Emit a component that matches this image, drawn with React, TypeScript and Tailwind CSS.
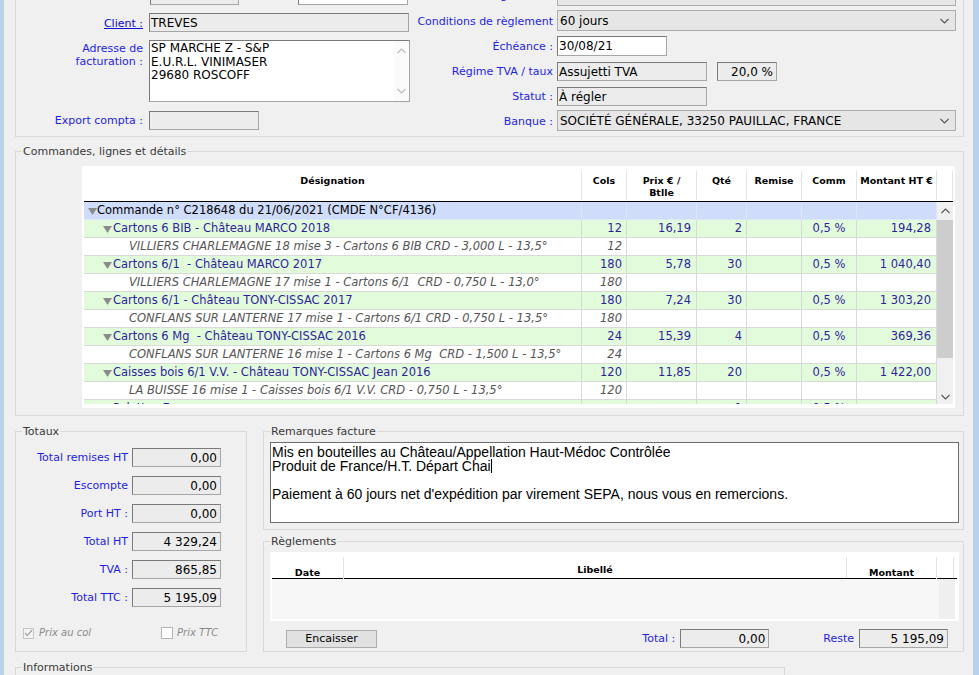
import type { ReactNode } from "react";

/* ---------- petits composants ---------- */

const LBL = "text-[11px] leading-[13px] text-[#1e1ee6] whitespace-nowrap";

const Chevron = ({ up = false }: { up?: boolean }) => (
  <svg width="9" height="6" viewBox="0 0 9 6" className="shrink-0">
    <polyline
      points={up ? "0.5,5 4.5,1 8.5,5" : "0.5,1 4.5,5 8.5,1"}
      fill="none"
      stroke="#5a5a5a"
      strokeWidth="1.2"
    />
  </svg>
);

const Tri = ({ className = "" }: { className?: string }) => (
  <svg width="9" height="8" viewBox="0 0 9 8" className={`shrink-0 ${className}`}>
    <polygon points="0,1 9,1 4.5,8" fill="#8c8c8c" />
  </svg>
);

const Box = ({
  className = "",
  white = false,
  right = false,
  children,
}: {
  className?: string;
  white?: boolean;
  right?: boolean;
  children?: ReactNode;
}) => (
  <div
    className={`flex shrink-0 items-center overflow-hidden whitespace-nowrap border border-[#a6a6a6] border-l-[#7a7a7a] border-t-[#7a7a7a] text-[12px] leading-[14px] text-black ${
      white ? "bg-white" : "bg-[#ececec]"
    } ${right ? "justify-end pr-[3px]" : "pl-[1px]"} ${className}`}
  >
    {children}
  </div>
);

const Combo = ({ children }: { children?: ReactNode }) => (
  <div className="flex h-[21px] w-[399px] shrink-0 items-center justify-between border border-[#adadad] bg-[#e6e6e6] pl-[2px] pr-[6px] text-[12px] leading-[14px]">
    <span>{children}</span>
    <Chevron />
  </div>
);

const Group = ({
  title,
  className = "",
  children,
}: {
  title: string;
  className?: string;
  children?: ReactNode;
}) => (
  <fieldset className={`min-w-0 border border-[#d9d9d9] ${className}`}>
    <legend className="ml-[6px] px-[1px] text-[11px] leading-[13px] text-[#3a3a3a]">{title}</legend>
    {children}
  </fieldset>
);

/* ---------- données ---------- */

type Ligne = {
  k: "cmd" | "prod" | "det";
  d: string;
  cols?: string;
  prix?: string;
  qte?: string;
  comm?: string;
  mt?: string;
};

const LIGNES: Ligne[] = [
  { k: "cmd", d: "Commande n° C218648 du 21/06/2021 (CMDE N°CF/4136)" },
  { k: "prod", d: "Cartons 6 BIB - Château MARCO 2018", cols: "12", prix: "16,19", qte: "2", comm: "0,5 %", mt: "194,28" },
  { k: "det", d: "VILLIERS CHARLEMAGNE 18 mise 3 - Cartons 6 BIB CRD - 3,000 L - 13,5°", cols: "12" },
  { k: "prod", d: "Cartons 6/1  - Château MARCO 2017", cols: "180", prix: "5,78", qte: "30", comm: "0,5 %", mt: "1 040,40" },
  { k: "det", d: "VILLIERS CHARLEMAGNE 17 mise 1 - Cartons 6/1  CRD - 0,750 L - 13,0°", cols: "180" },
  { k: "prod", d: "Cartons 6/1 - Château TONY-CISSAC 2017", cols: "180", prix: "7,24", qte: "30", comm: "0,5 %", mt: "1 303,20" },
  { k: "det", d: "CONFLANS SUR LANTERNE 17 mise 1 - Cartons 6/1 CRD - 0,750 L - 13,5°", cols: "180" },
  { k: "prod", d: "Cartons 6 Mg  - Château TONY-CISSAC 2016", cols: "24", prix: "15,39", qte: "4", comm: "0,5 %", mt: "369,36" },
  { k: "det", d: "CONFLANS SUR LANTERNE 16 mise 1 - Cartons 6 Mg  CRD - 1,500 L - 13,5°", cols: "24" },
  { k: "prod", d: "Caisses bois 6/1 V.V. - Château TONY-CISSAC Jean 2016", cols: "120", prix: "11,85", qte: "20", comm: "0,5 %", mt: "1 422,00" },
  { k: "det", d: "LA BUISSE 16 mise 1 - Caisses bois 6/1 V.V. CRD - 0,750 L - 13,5°", cols: "120" },
  { k: "prod", d: "Palettes Euro", qte: "1", comm: "0,5 %" },
];

const TOTAUX = [
  ["Total remises HT", "0,00"],
  ["Escompte", "0,00"],
  ["Port HT :", "0,00"],
  ["Total HT", "4 329,24"],
  ["TVA :", "865,85"],
  ["Total TTC :", "5 195,09"],
];

/* ---------- tableau des lignes ---------- */

const HeadCell = ({ className, children }: { className: string; children?: ReactNode }) => (
  <div className={`flex shrink-0 flex-col pt-[5px] pb-[1px] ${className}`}>
    <div className="flex-1 border-r border-[#e3e3e3] pt-[4px] text-center text-[9.5px] font-bold leading-[12px]">
      {children}
    </div>
  </div>
);

const LigneRow = ({ l }: { l: Ligne }) => {
  const bg = l.k === "cmd" ? "bg-[#cfdcfa]" : l.k === "prod" ? "bg-[#e2fbdb]" : "bg-white";
  const sep = l.k === "cmd" ? "border-[#dfe6fb]" : "border-[#d9d9d9]";
  const txt = l.k === "cmd" ? "text-black" : l.k === "prod" ? "text-[#2e1f9e]" : "italic text-[#555555]";
  const num = `flex shrink-0 items-center justify-end border-r ${sep}`;
  return (
    <div className={`flex h-[18px] shrink-0 border-b ${sep} ${bg} ${txt} text-[11.5px] leading-[17px]`}>
      <div className={`flex w-[498px] shrink-0 items-center overflow-hidden whitespace-pre border-r ${sep}`}>
        {l.k === "cmd" && <Tri className="ml-[4px]" />}
        {l.k === "prod" && <Tri className="ml-[19px] mr-[1px]" />}
        <span className={l.k === "det" ? "ml-[45px]" : ""}>{l.d}</span>
      </div>
      <div className={`${num} w-[45px] pr-[4px]`}>{l.cols}</div>
      <div className={`${num} w-[70px] pr-[5px]`}>{l.prix}</div>
      <div className={`${num} w-[50px] pr-[4px]`}>{l.qte}</div>
      <div className={`${num} w-[55px] pr-[4px]`}></div>
      <div className={`flex w-[55px] shrink-0 items-center justify-center border-r ${sep}`}>{l.comm}</div>
      <div className={`${num} w-[80px] pr-[5px]`}>{l.mt}</div>
    </div>
  );
};

const TableLignes = () => (
  <div className="flex h-[242px] w-[873px] flex-col bg-white px-[2px]">
    <div className="flex h-[36px] shrink-0 border-b border-black">
      <HeadCell className="w-[498px]">Désignation</HeadCell>
      <HeadCell className="w-[45px]">Cols</HeadCell>
      <HeadCell className="w-[70px]">
        Prix € /<br />Btlle
      </HeadCell>
      <HeadCell className="w-[50px]">Qté</HeadCell>
      <HeadCell className="w-[55px]">Remise</HeadCell>
      <HeadCell className="w-[55px]">Comm</HeadCell>
      <HeadCell className="w-[80px]">Montant HT €</HeadCell>
      <HeadCell className="w-[16px]" />
    </div>
    <div className="flex h-[202px] shrink-0 overflow-hidden">
      <div className="flex w-[853px] shrink-0 flex-col">
        {LIGNES.map((l, i) => (
          <LigneRow key={i} l={l} />
        ))}
      </div>
      <div className="flex w-[16px] shrink-0 flex-col bg-[#f0f0f0]">
        <div className="flex h-[18px] shrink-0 items-center justify-center">
          <Chevron up />
        </div>
        <div className="h-[138px] shrink-0 bg-[#cdcdcd]" />
        <div className="flex-1" />
        <div className="flex h-[14px] shrink-0 items-center justify-center">
          <Chevron />
        </div>
      </div>
    </div>
  </div>
);

/* ---------- page ---------- */

export default function App() {
  return (
    <div className="flex h-[675px] w-[979px] overflow-hidden bg-[#f0f0f0] font-['DejaVu_Sans',sans-serif] text-black">
      <div className="w-[4px] shrink-0 bg-[#b9d1ea]" />

      <div className="w-[969px] shrink-0">
        {/* En-tête de facture (défilé vers le haut) */}
        <div className="-mt-[20px] ml-[11px] flex h-[157px] w-[949px] border border-t-0 border-[#d9d9d9]">
          <div className="flex w-[394px] shrink-0 flex-col">
            <div className="mt-[7px] flex h-[18px] pl-[134px]">
              <Box className="h-[18px] w-[89px]" />
              <Box white className="ml-[59px] h-[18px] w-[110px]" />
            </div>
            <div className="mt-[8px] flex h-[19px] items-center">
              <div className={`${LBL} w-[133px] pr-[6px] pt-[1px] text-right`}>
                <span className="text-[#0a0ad8] underline">Client :</span>
              </div>
              <Box className="h-[19px] w-[260px]">TREVES</Box>
            </div>
            <div className="mt-[8px] flex items-start">
              <div className={`${LBL} w-[133px] pr-[6px] pt-[2px] text-right leading-[12px]`}>
                Adresse de
                <br />
                facturation :
              </div>
              <Box white className="h-[62px] w-[261px] items-stretch">
                <div className="flex-1 pt-[1px] leading-[13.5px]">
                  SP MARCHE Z - S&amp;P
                  <br />
                  E.U.R.L. VINIMASER
                  <br />
                  29680 ROSCOFF
                </div>
                <div className="flex w-[15px] shrink-0 flex-col items-center justify-between bg-[#f7f7f7] py-[7px] opacity-40">
                  <Chevron up />
                  <Chevron />
                </div>
              </Box>
            </div>
            <div className="mt-[9px] flex h-[19px] items-center">
              <div className={`${LBL} w-[133px] pr-[6px] text-right`}>Export compta :</div>
              <Box className="h-[19px] w-[110px]" />
            </div>
          </div>

          <div className="flex flex-1 flex-col">
            <div className="mt-[5px] flex items-center">
              <div className={`${LBL} w-[147px] pr-[4px] text-right`}>Mode de règlement :</div>
              <Combo />
            </div>
            <div className="mt-[4px] flex items-center">
              <div className={`${LBL} w-[147px] pr-[4px] pt-[1px] text-right`}>Conditions de règlement</div>
              <Combo>60 jours</Combo>
            </div>
            <div className="mt-[5px] flex items-center">
              <div className={`${LBL} w-[147px] pr-[4px] text-right`}>Échéance :</div>
              <Box white className="h-[20px] w-[110px]">30/08/21</Box>
            </div>
            <div className="mt-[6px] flex items-center">
              <div className={`${LBL} w-[147px] pr-[4px] text-right`}>Régime TVA / taux</div>
              <Box className="h-[19px] w-[150px]">Assujetti TVA</Box>
              <Box right className="ml-[10px] h-[19px] w-[60px]">
                20,0 %
              </Box>
            </div>
            <div className="mt-[6px] flex items-center">
              <div className={`${LBL} w-[147px] pr-[4px] text-right`}>Statut :</div>
              <Box className="h-[19px] w-[150px]">À régler</Box>
            </div>
            <div className="mt-[4px] flex items-center">
              <div className={`${LBL} w-[147px] pr-[4px] pt-[1px] text-right`}>Banque :</div>
              <Combo>SOCIÉTÉ GÉNÉRALE, 33250 PAUILLAC, FRANCE</Combo>
            </div>
          </div>
        </div>

        {/* Commandes */}
        <Group title="Commandes, lignes et détails" className="ml-[11px] mt-[8px] w-[949px]">
          <div className="pb-[7px] pl-[66px] pt-[8px]">
            <TableLignes />
          </div>
        </Group>

        {/* Bas de page */}
        <div className="ml-[11px] mt-[9px] flex gap-[16px]">
          <Group title="Totaux" className="h-[227px] w-[232px] shrink-0">
            <div className="flex flex-col pt-[10px]">
              {TOTAUX.map(([l, v], i) => (
                <div key={l} className={`flex h-[19px] items-center ${i ? "mt-[9px]" : ""}`}>
                  <div className={`${LBL} w-[112px] text-right`}>{l}</div>
                  <Box right className="ml-[4px] h-[19px] w-[89px]">
                    {v}
                  </Box>
                </div>
              ))}
              <div className="mt-[20px] flex h-[12px] items-center text-[10px] italic leading-[12px] text-[#8a8a8a]">
                <div className="ml-[7px] flex h-[11px] w-[11px] items-center justify-center border border-[#c4c4c4] bg-[#f4f4f4]">
                  <svg width="9" height="8" viewBox="0 0 9 8">
                    <polyline points="1,4 3.5,6.5 8,1" fill="none" stroke="#a8a8a8" strokeWidth="1.3" />
                  </svg>
                </div>
                <span className="ml-[5px] w-[122px]">Prix au col</span>
                <div className="h-[12px] w-[12px] border border-[#b4b4b4] bg-white" />
                <span className="ml-[4px]">Prix TTC</span>
              </div>
            </div>
          </Group>

          <div className="flex w-[701px] shrink-0 flex-col">
            <Group title="Remarques facture" className="h-[105px]">
              <div className="pl-[6px] pt-[4px]">
                <div className="h-[81px] w-[689px] border border-[#6e6e6e] bg-white pl-[1px] pt-[2px] font-['Liberation_Sans',Arial,sans-serif] text-[14px] leading-[14px] text-black">
                  <div>Mis en bouteilles au Château/Appellation Haut-Médoc Contrôlée</div>
                  <div className="flex items-center">
                    Produit de France/H.T. Départ Chai
                    <span className="inline-block h-[14px] w-px bg-black" />
                  </div>
                  <div className="h-[14px]" />
                  <div>Paiement à 60 jours net d'expédition par virement SEPA, nous vous en remercions.</div>
                </div>
              </div>
            </Group>

            <Group title="Règlements" className="mt-[5px] h-[117px]">
              <div className="pl-[6px] pt-[4px]">
                <div className="flex h-[69px] w-[689px] flex-col bg-white p-[2px]">
                  <div className="flex h-[25px] shrink-0 border-b border-black text-[9.5px] font-bold leading-[12px]">
                    <div className="flex w-[72px] shrink-0 flex-col pt-[3px]">
                      <div className="flex-1 border-r border-[#e3e3e3] pt-[10px] text-center">Date</div>
                    </div>
                    <div className="flex w-[503px] shrink-0 flex-col pt-[3px]">
                      <div className="flex-1 border-r border-[#e3e3e3] pt-[7px] text-center">Libellé</div>
                    </div>
                    <div className="flex w-[90px] shrink-0 flex-col pt-[3px]">
                      <div className="flex-1 border-r border-[#e3e3e3] pt-[10px] text-center">Montant</div>
                    </div>
                    <div className="flex w-[17px] shrink-0 flex-col pt-[3px]">
                      <div className="flex-1 border-r border-[#e3e3e3]" />
                    </div>
                  </div>
                  <div className="flex flex-1 bg-[#f7f7f7]">
                    <div className="flex-1" />
                    <div className="w-[16px] bg-[#efefef]" />
                    <div className="w-[2px] bg-white" />
                  </div>
                </div>
                <div className="mt-[8px] flex items-center">
                  <div className="ml-[16px] flex h-[18px] w-[91px] items-center justify-center border border-[#adadad] bg-[#e1e1e1] text-[11px] leading-[13px]">
                    Encaisser
                  </div>
                  <div className={`${LBL} ml-auto`}>Total :</div>
                  <Box right className="ml-[5px] h-[19px] w-[89px]">
                    0,00
                  </Box>
                  <div className={`${LBL} ml-[54px]`}>Reste</div>
                  <Box right className="ml-[5px] mr-[15px] h-[19px] w-[89px]">
                    5 195,09
                  </Box>
                </div>
              </div>
            </Group>
          </div>
        </div>

        {/* Informations */}
        <Group title="Informations" className="ml-[11px] mt-[9px] h-[40px] w-[770px]" />
      </div>

      <div className="flex-1 bg-[#b9d1ea]" />
    </div>
  );
}
